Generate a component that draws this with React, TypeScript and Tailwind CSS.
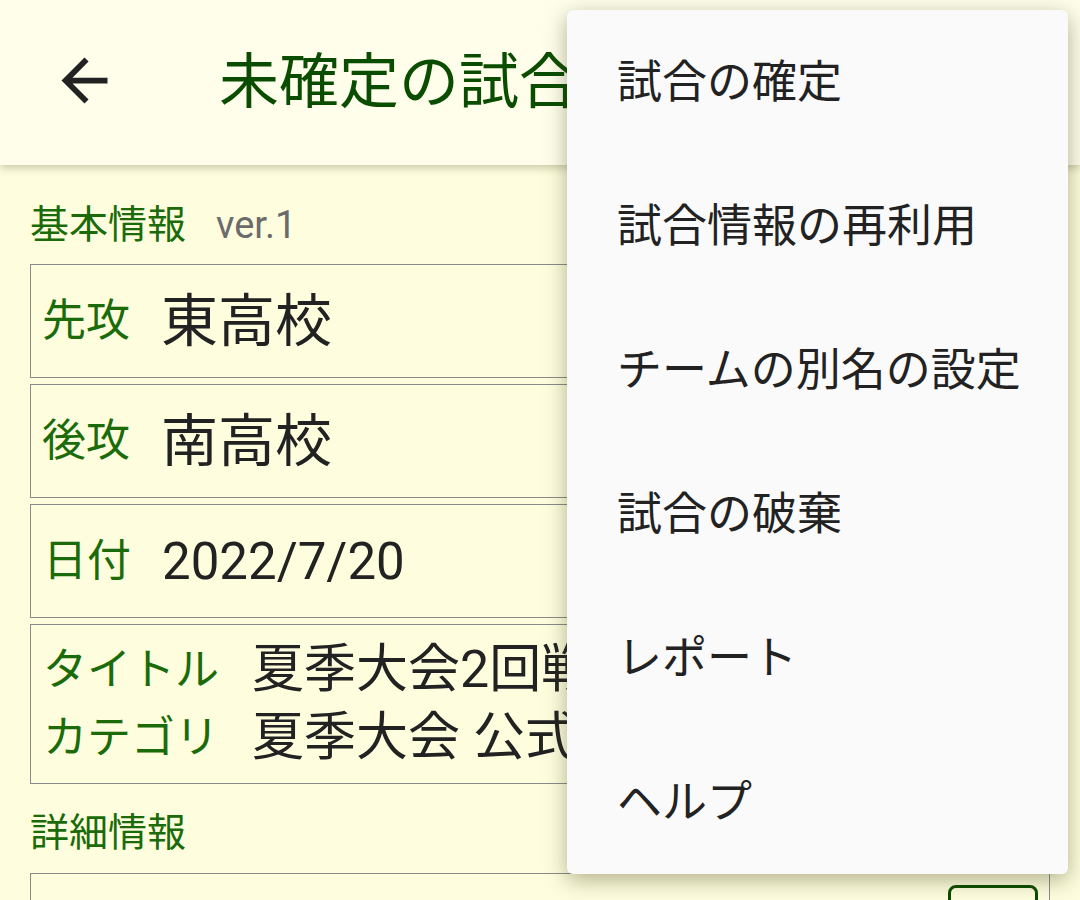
import React from 'react'

const font = { fontFamily: 'Roboto, "Noto Sans CJK JP", sans-serif' }

const menuItems = ['試合の確定', '試合情報の再利用', 'チームの別名の設定', '試合の破棄', 'レポート', 'ヘルプ']

function BackArrow() {
  return (
    <svg viewBox="0 0 24 24" className="w-[69px] h-[69px]" fill="#222">
      <path d="M20 11H7.83l5.59-5.59L12 4l-8 8 8 8 1.41-1.41L7.83 13H20v-2z" />
    </svg>
  )
}

function TeamRow({ label, value }: { label: string; value: string }) {
  return (
    <div className="h-[114px] mb-[6px] border border-[#8a8a8a] flex items-center pl-[11px] overflow-hidden">
      <span className="text-[44px] leading-none text-[#1b6b0a] whitespace-nowrap">{label}</span>
      <span className="ml-[31px] text-[57px] leading-none text-[#222] whitespace-nowrap">{value}</span>
    </div>
  )
}

export default function App() {
  return (
    <div className="relative w-[1080px] h-[900px] overflow-hidden bg-[#fefedf]" style={font}>
      {/* Header */}
      <header className="relative z-10 h-[165px] bg-[#fefeeb] shadow-[0_3px_8px_rgba(80,80,40,0.3)] flex items-center">
        <div className="ml-[50px] mt-[-4px]">
          <BackArrow />
        </div>
        <h1 className="ml-[100px] text-[60px] leading-none text-[#0b4d00] whitespace-nowrap">未確定の試合</h1>
      </header>

      {/* Content */}
      <main className="px-[30px]">
        <div className="pt-[36px] mb-[15px] h-[48px] box-content flex items-center">
          <span className="text-[39px] leading-[48px] text-[#1b6b0a]">基本情報</span>
          <span className="ml-[30px] text-[38px] leading-[48px] text-[#6b6b6b]">ver.1</span>
        </div>

        <TeamRow label="先攻" value="東高校" />
        <TeamRow label="後攻" value="南高校" />

        <div className="h-[114px] mb-[6px] border border-[#8a8a8a] flex items-center pl-[12px]">
          <span className="text-[44px] leading-none text-[#1b6b0a]">日付</span>
          <span className="ml-[31px] text-[51px] leading-none text-[#222]">2022/7/20</span>
        </div>

        <div className="border border-[#8a8a8a] pl-[12px] py-[11px] grid grid-cols-[auto_1fr] gap-x-[33px]">
          <span className="text-[44px] leading-[68px] text-[#1b6b0a] whitespace-nowrap">タイトル</span>
          <span className="text-[52px] leading-[68px] text-[#222] whitespace-nowrap">夏季大会2回戦</span>
          <span className="text-[44px] leading-[68px] text-[#1b6b0a] whitespace-nowrap">カテゴリ</span>
          <span className="text-[52px] leading-[68px] text-[#222] whitespace-nowrap">夏季大会 公式戦</span>
        </div>

        <div className="mt-[25px] mb-[16px] h-[48px] flex items-center">
          <span className="text-[39px] leading-[48px] text-[#1b6b0a]">詳細情報</span>
        </div>

        <div className="h-[120px] border border-[#8a8a8a] flex justify-end pt-[11px] pr-[11px]">
          <div className="w-[90px] h-[70px] rounded-[8px] border-[3px] border-[#0b4d00]" />
        </div>
      </main>

      {/* Overflow menu */}
      <div className="absolute z-20 left-[567px] top-[10px] w-[501px] rounded-[6px] bg-[#fafafa] shadow-[0_6px_22px_rgba(60,60,20,0.4)]">
        {menuItems.map((item) => (
          <div key={item} className="h-[144px] flex items-center pl-[50px] text-[45px] leading-none text-[#222] whitespace-nowrap">
            {item}
          </div>
        ))}
      </div>
    </div>
  )
}
